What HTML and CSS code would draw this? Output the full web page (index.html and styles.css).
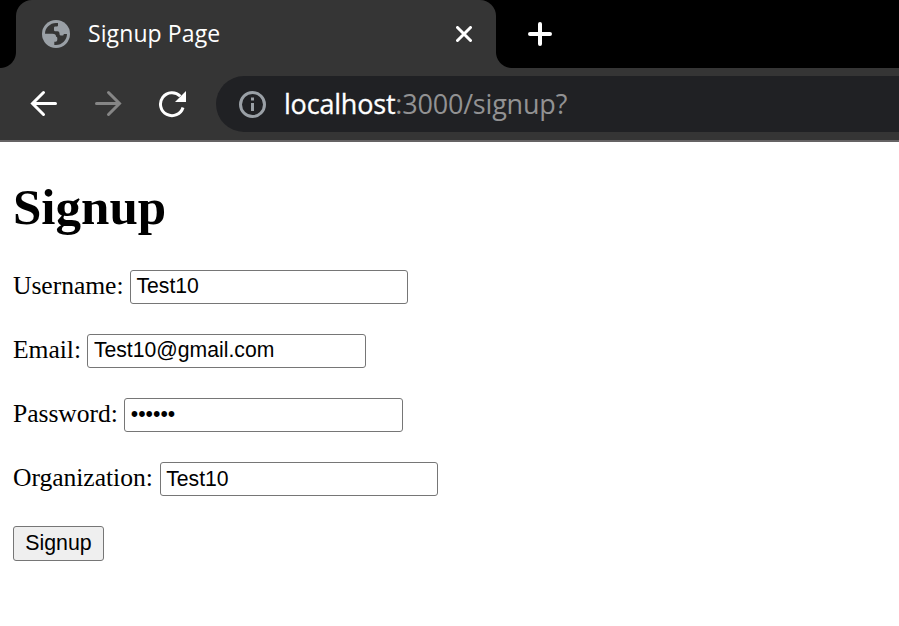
FILE: index.html
```html
<!DOCTYPE html>
<html lang="en">
<head>
<meta charset="utf-8">
<title>Signup Page</title>
<link rel="stylesheet" href="styles.css">
</head>
<body>
<header class="browser">
  <div class="tabs">
    <div class="tab-edge left"></div>
    <div class="tab">
      <svg class="globe" viewBox="0 0 28 28"><circle cx="14" cy="14" r="14" fill="#9aa0a6"/><path fill="#353535" d="M3 13.700C3 8 8 3 14 3h2v2.500q0 1-1.200 1h-1.600q-1.200 0-1.200 1.200v2.300q0 1.300 1.300 1.300h2.200q2 0 2 2v.7q0 1.500 1.500 1.500h1.500q1.300 0 1.300-1.500H25C25 20 20 25 14 25h-1.700v-3.200h1.200q1.800 0 1.800-1.800v-2q0-1.200-1.200-1.200q0-3.100-3.600-3.100z"/></svg>
      <span class="tab-title">Signup Page</span>
      <svg class="close" viewBox="0 0 16 16"><path d="M1.500 1.500l13 13M14.500 1.500l-13 13"/></svg>
    </div>
    <div class="tab-edge right"></div>
    <svg class="plus" viewBox="0 0 24 24"><path d="M12 2v20M2 12h20"/></svg>
  </div>
  <nav class="toolbar">
    <svg class="nav-icon" viewBox="0 0 28 28"><path d="M25.500 13.500H3M13.500 2.500L2.500 13.500l11 11"/></svg>
    <svg class="nav-icon forward" viewBox="0 0 28 28"><path d="M2.500 13.500H25M14.500 2.500l11 11-11 11"/></svg>
    <svg class="nav-icon reload" viewBox="0 0 28 28"><path d="M22.300 6.200A11.500 11.500 0 1 0 25 17.500"/><path class="solid" d="M28 1v11H17z"/></svg>
    <div class="address">
      <svg class="info" viewBox="0 0 28 28"><circle cx="14.500" cy="14.500" r="12"/><path d="M14.500 13v8M14.500 7.500v3"/></svg>
      <span class="url"><span class="host">localhost</span>:3000/signup?</span>
    </div>
  </nav>
</header>
<main>
  <h1>Signup</h1>
  <form>
    <div class="row"><label for="username">Username:</label><input id="username" type="text" value="Test10"></div>
    <div class="row"><label for="email">Email:</label><input id="email" type="email" value="Test10@gmail.com"></div>
    <div class="row"><label for="password">Password:</label><input id="password" type="password" value="test10"></div>
    <div class="row"><label for="organization">Organization:</label><input id="organization" type="text" value="Test10"></div>
    <button type="submit">Signup</button>
  </form>
</main>
</body>
</html>
```
FILE: styles.css
```css
* { box-sizing: border-box; }
body { margin: 0; background: #fff; color: #000; font-family: "Liberation Serif", serif; overflow: hidden; }
svg { display: block; flex: none; fill: none; }
.browser { height: 142px; background: #353535; border-bottom: 2px solid #656364; font-family: "Open Sans", sans-serif; }
.tabs { display: flex; align-items: center; height: 68px; background: #000; }
.tab { display: flex; align-items: center; width: 480px; height: 68px; padding: 0 24px 0 26px; border-radius: 16px 16px 0 0; background: #353535; }
.tab-edge { width: 16px; height: 16px; align-self: flex-end; }
.left { background: radial-gradient(circle at 0 0, #000 15.5px, #353535 16.5px); }
.right { background: radial-gradient(circle at 100% 0, #000 15.5px, #353535 16.5px); }
.globe { width: 28px; height: 28px; }
.tab-title { margin-left: 18px; padding-bottom: 2px; flex: 1; color: #fff; font-size: 23px; line-height: 32px; letter-spacing: 0.1px; white-space: nowrap; }
.close { width: 16px; height: 16px; stroke: #fff; stroke-width: 3; stroke-linecap: round; }
.plus { width: 24px; height: 24px; margin-left: 16px; stroke: #fff; stroke-width: 4; stroke-linecap: round; }
.toolbar { display: flex; align-items: center; height: 72px; padding-left: 30px; }
.nav-icon { width: 28px; height: 28px; margin-right: 36px; stroke: #fff; stroke-width: 3; stroke-linecap: round; }
.forward { stroke: #868686; }
.reload { margin-right: 30px; stroke-linecap: butt; }
.reload .solid { fill: #fff; stroke: none; }
.address { flex: 1; display: flex; align-items: center; height: 56px; padding-left: 22px; border-radius: 28px 0 0 28px; background: #202124; }
.info { width: 28px; height: 28px; stroke: #9aa0a6; stroke-width: 3; }
.url { margin-left: 18px; color: #929293; font-size: 27px; line-height: 36px; letter-spacing: -0.2px; white-space: nowrap; }
.host { color: #fff; -webkit-text-stroke: 0.3px #fff; }
main { padding: 34px 13px 0; }
h1 { margin: 0 0 34px; height: 60px; font-size: 51px; line-height: 62px; font-weight: bold; }
.row { display: flex; align-items: center; height: 34px; margin-bottom: 30px; font-size: 25.6px; }
label { line-height: 32px; padding-bottom: 2px; letter-spacing: -0.04px; }
input { width: 278px; height: 34px; margin: 0 0 0 6.4px; padding: 0 5.5px 2px; border: 1px solid #767676; border-radius: 3px; background: #fff; color: #000; font: 21.2px "Liberation Sans", sans-serif; }
#email, #password { width: 279px; }
#organization { margin-left: 7px; padding-bottom: 1px; }
button { display: block; width: 91px; height: 35px; padding: 0 0 1px; border: 1px solid #767676; border-radius: 3px; background: #efefef; color: #000; font: 21.333px "Liberation Sans", sans-serif; }
```
